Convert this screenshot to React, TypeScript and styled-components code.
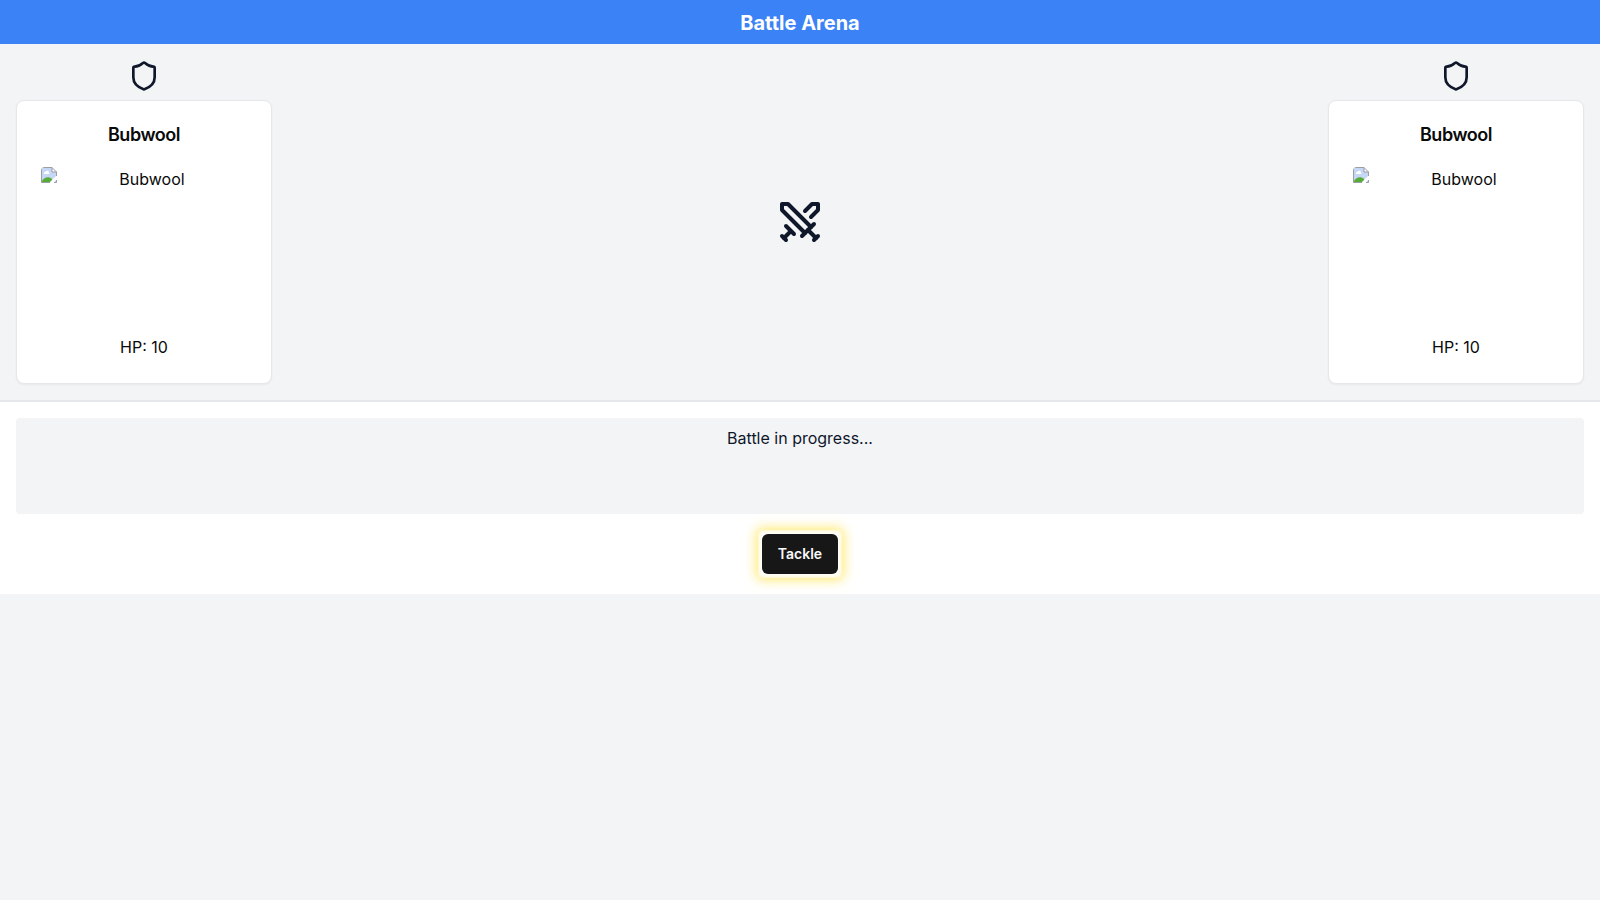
import React from "react";
import styled, { createGlobalStyle } from "styled-components";
import { Shield, Swords } from "lucide-react";

const GlobalStyle = createGlobalStyle`
  *, *::before, *::after { box-sizing: border-box; }
  body {
    margin: 0;
    font-family: Inter, "Liberation Sans", sans-serif;
    font-size: 16px;
    line-height: 24px;
    color: #0f172a;
    background: #f3f4f6;
  }
  h1, h2, p { margin: 0; }
`;

const Page = styled.div`
  min-height: 100vh;
  display: flex;
  flex-direction: column;
  background: #f3f4f6;
`;

const Header = styled.header`
  padding: 9px 8px 7px;
  background: #3b82f6;
  color: #fff;
  text-align: center;
`;

const Title = styled.h1`
  font-size: 20px;
  line-height: 28px;
  font-weight: 700;
`;

const Arena = styled.main`
  display: flex;
  justify-content: space-between;
  align-items: center;
  padding: 16px;
`;

const Fighter = styled.section`
  display: flex;
  flex-direction: column;
  align-items: center;
  gap: 8px;
`;

const Card = styled.article`
  width: 256px;
  padding: 24px;
  border: 1px solid #e5e7eb;
  border-radius: 8px;
  background: #fff;
  color: #0a0a0a;
  box-shadow: 0 1px 2px rgba(0, 0, 0, 0.05);
  text-align: center;
`;

const Name = styled.h2`
  font-size: 18px;
  line-height: 20px;
  font-weight: 600;
  letter-spacing: -0.025em;
`;

const Portrait = styled.div`
  display: flex;
  height: 160px;
  margin: 22px 0 8px;
  border-radius: 4px;
  overflow: hidden;
`;

const PortraitLabel = styled.span`
  flex: 1;
`;

const Panel = styled.section`
  padding: 16px;
  border-top: 2px solid #e5e7eb;
  background: #fff;
`;

const Log = styled.div`
  height: 96px;
  padding: 8px;
  border-radius: 4px;
  background: #f3f4f6;
  text-align: center;
`;

const Actions = styled.div`
  display: flex;
  justify-content: center;
  margin-top: 16px;
`;

const Glow = styled.div`
  padding: 4px;
  border-radius: 4px;
  box-shadow:
    0 0 12px 2px rgba(255, 220, 20, 0.6),
    inset 0 0 5px rgba(255, 220, 20, 0.4);
`;

const Action = styled.button`
  display: block;
  height: 40px;
  padding: 0 16px;
  border: 0;
  border-radius: 6px;
  background: #171717;
  color: #fafafa;
  font: 600 14px/20px Inter, "Liberation Sans", sans-serif;
  cursor: pointer;
`;

function MissingImage() {
  return (
    <svg width="16" height="16" viewBox="0 0 16 16" aria-hidden="true">
      <path d="M1 1h10l4 4v10H1z" fill="#c6d7f6" />
      <path d="M3 6a1.5 1.5 0 0 1 1.5-1.5 2 2 0 0 1 3.5 1 1 1 0 0 1 0 1.5H3z" fill="#fff" />
      <path d="M1 15v-1c2-4 7-5 10-2v3z" fill="#55ac36" />
      <path d="M8 16l8-8v4l-4 4z" fill="#fff" />
      <path d="M11 1v4h4z" fill="#fff" />
      <path
        d="M.5 15.5V.5H11L15.5 5v4M11 .5V5h4.5M.5 15.5H9M13 15.5h2.500V13"
        fill="none"
        stroke="#9a9da3"
      />
    </svg>
  );
}

function Combatant({ name, hp }: { name: string; hp: number }) {
  return (
    <Fighter>
      <Shield size={32} />
      <Card>
        <Name>{name}</Name>
        <Portrait>
          <MissingImage />
          <PortraitLabel>{name}</PortraitLabel>
        </Portrait>
        <p>HP: {hp}</p>
      </Card>
    </Fighter>
  );
}

export default function App() {
  return (
    <Page>
      <GlobalStyle />
      <Header>
        <Title>Battle Arena</Title>
      </Header>
      <Arena>
        <Combatant name="Bubwool" hp={10} />
        <Swords size={48} />
        <Combatant name="Bubwool" hp={10} />
      </Arena>
      <Panel>
        <Log>
          <p>Battle in progress...</p>
        </Log>
        <Actions>
          <Glow>
            <Action type="button">Tackle</Action>
          </Glow>
        </Actions>
      </Panel>
    </Page>
  );
}
